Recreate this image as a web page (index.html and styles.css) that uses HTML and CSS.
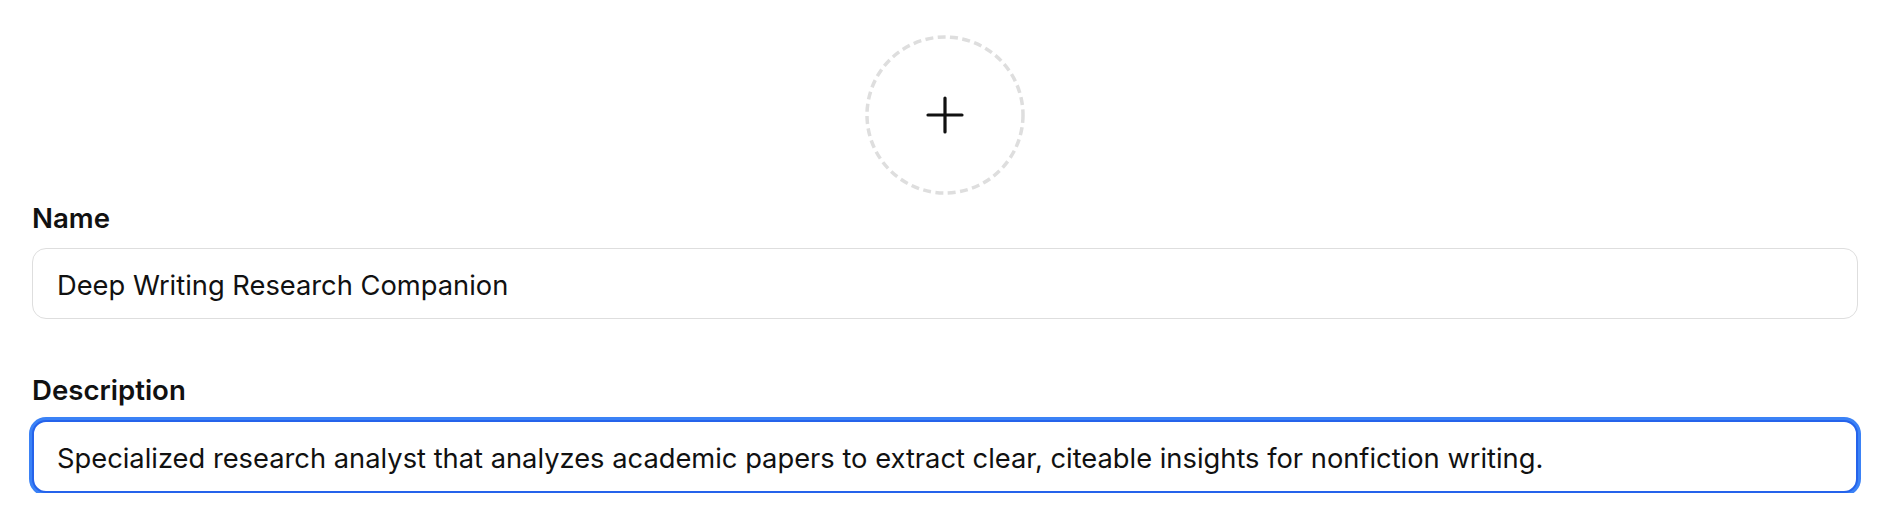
FILE: index.html
```html
<!DOCTYPE html>
<html lang="en">
<head>
<meta charset="UTF-8">
<meta name="viewport" content="width=device-width, initial-scale=1.0">
<title>Edit Assistant</title>
<link rel="stylesheet" href="styles.css">
</head>
<body>

<div class="container">
    <div class="avatar-row">
        <button class="avatar" type="button" aria-label="Add image">
            <svg width="160" height="160" viewBox="0 0 160 160">
                <circle cx="80" cy="80" r="78" fill="none" stroke="#dedede" stroke-width="3.5" stroke-dasharray="8 4.4"/>
                <path d="M80 63 V97 M63 80 H97" stroke="#111" stroke-width="3.2" stroke-linecap="round"/>
            </svg>
        </button>
    </div>

    <div class="form-group">
        <label for="name">Name</label>
        <input type="text" id="name" name="name" value="Deep Writing Research Companion">
    </div>

    <div class="form-group">
        <label for="description">Description</label>
        <input type="text" id="description" name="description" class="focused" value="Specialized research analyst that analyzes academic papers to extract clear, citeable insights for nonfiction writing.">
    </div>
</div>

</body>
</html>
```

FILE: styles.css
```css
body {
    font-family: Inter, "Noto Sans", sans-serif;
    background-color: #ffffff;
    color: #111;
    margin: 0;
}
.container {
    padding: 35px 24px 0 32px;
    display: flex;
    flex-direction: column;
}
.avatar-row {
    display: flex;
    justify-content: center;
}
.avatar {
    width: 160px;
    height: 160px;
    padding: 0;
    border: none;
    background: none;
    display: block;
}
.avatar svg {
    display: block;
}
.form-group {
    display: flex;
    flex-direction: column;
}
.form-group + .form-group {
    margin-top: 48px;
}
label {
    display: block;
    font-size: 27.6px;
    font-weight: 600;
    line-height: 34px;
    margin-top: 6px;
    margin-bottom: 13px;
}
input {
    height: 71px;
    padding: 4px 24px 0 24px;
    font-family: inherit;
    font-size: 27.3px;
    color: #111;
    border: 1px solid #dedede;
    border-radius: 14px;
    box-sizing: border-box;
    outline: none;
}
input.focused {
    height: 73px;
    padding-left: 23px;
    border: 2px solid #2563eb;
    box-shadow: 0 0 0 3px #3b82f6;
}
```
